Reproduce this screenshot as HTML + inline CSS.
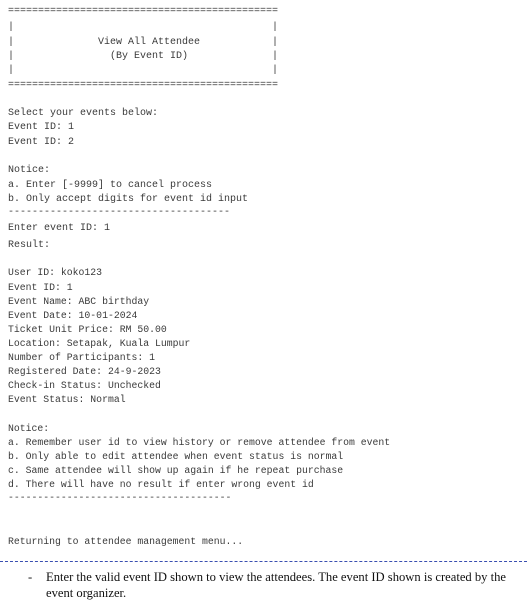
<!DOCTYPE html>
<html><head><style>
body{margin:0;width:527px;height:598px;background:#fff;position:relative;overflow:hidden}
.m{position:absolute;left:8px;font-family:"Liberation Mono",monospace;font-size:10px;line-height:14px;white-space:pre;color:#3a3a3a}
.s{font-size:9.8px}
.sep{position:absolute;left:0;top:561px;width:527px;border-top:1px dashed #3a4fb0}
.t{position:absolute;left:46px;font-family:"Liberation Serif",serif;font-size:12.6px;line-height:16px;color:#111;white-space:nowrap}
</style></head><body>
<div class="m" style="top:5px">=============================================</div>
<div class="m" style="top:21px">|                                           |</div>
<div class="m" style="top:36px">|              View All Attendee            |</div>
<div class="m" style="top:50px">|                (By Event ID)              |</div>
<div class="m" style="top:64px">|                                           |</div>
<div class="m" style="top:79px">=============================================</div>
<div class="m" style="top:107px">Select your events below:</div>
<div class="m" style="top:121px">Event ID: 1</div>
<div class="m" style="top:136px">Event ID: 2</div>
<div class="m" style="top:164px">Notice:</div>
<div class="m" style="top:179px">a. Enter [-9999] to cancel process</div>
<div class="m" style="top:193px">b. Only accept digits for event id input</div>
<div class="m" style="top:206px">-------------------------------------</div>
<div class="m" style="top:222px">Enter event ID: 1</div>
<div class="m" style="top:239px">Result:</div>
<div class="m s" style="top:266px">User ID: koko123</div>
<div class="m s" style="top:281px">Event ID: 1</div>
<div class="m s" style="top:295px">Event Name: ABC birthday</div>
<div class="m s" style="top:309px">Event Date: 10-01-2024</div>
<div class="m s" style="top:323px">Ticket Unit Price: RM 50.00</div>
<div class="m s" style="top:337px">Location: Setapak, Kuala Lumpur</div>
<div class="m s" style="top:351px">Number of Participants: 1</div>
<div class="m s" style="top:365px">Registered Date: 24-9-2023</div>
<div class="m s" style="top:379px">Check-in Status: Unchecked</div>
<div class="m s" style="top:393px">Event Status: Normal</div>
<div class="m s" style="top:422px">Notice:</div>
<div class="m s" style="top:436px">a. Remember user id to view history or remove attendee from event</div>
<div class="m s" style="top:450px">b. Only able to edit attendee when event status is normal</div>
<div class="m s" style="top:464px">c. Same attendee will show up again if he repeat purchase</div>
<div class="m s" style="top:478px">d. There will have no result if enter wrong event id</div>
<div class="m s" style="top:491px">--------------------------------------</div>
<div class="m s" style="top:535px">Returning to attendee management menu...</div>
<div class="sep"></div>
<div class="t" style="left:28px;top:569px">-</div>
<div class="t" style="top:569px">Enter the valid event ID shown to view the attendees. The event ID shown is created by the</div>
<div class="t" style="top:585px">event organizer.</div>
</body></html>
